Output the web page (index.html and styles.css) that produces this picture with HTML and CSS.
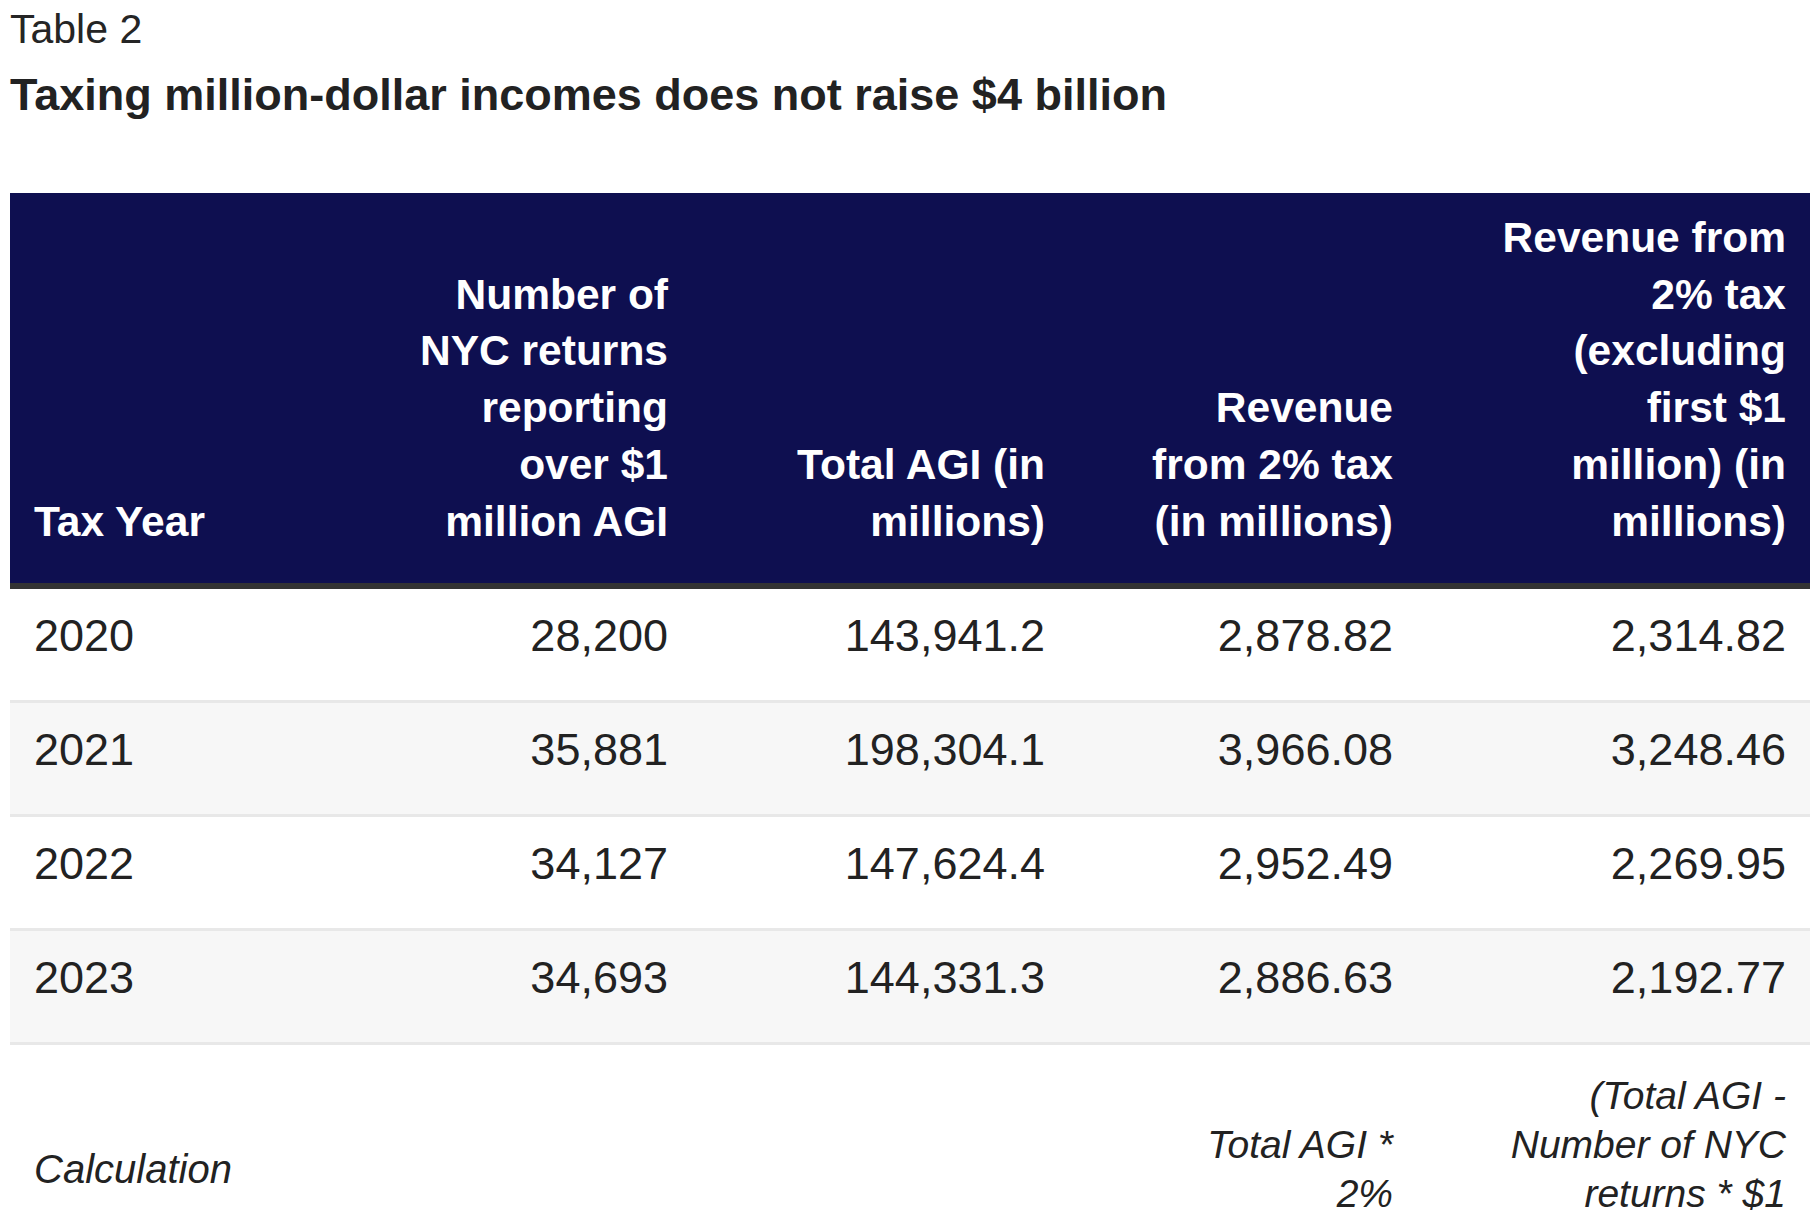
FILE: index.html
```html
<!DOCTYPE html>
<html lang="en">
<head>
<meta charset="utf-8">
<title>Table 2</title>
<link rel="stylesheet" href="styles.css">
</head>
<body>
<div class="page">
  <div class="label">Table 2</div>
  <h1 class="title">Taxing million-dollar incomes does not raise $4 billion</h1>
  <table class="data">
    <colgroup>
      <col class="c1"><col class="c2"><col class="c3"><col class="c4"><col class="c5">
    </colgroup>
    <thead>
      <tr>
        <th class="left">Tax Year</th>
        <th>Number of<br>NYC returns<br>reporting<br>over $1<br>million AGI</th>
        <th>Total AGI (in<br>millions)</th>
        <th>Revenue<br>from 2% tax<br>(in millions)</th>
        <th>Revenue from<br>2% tax<br>(excluding<br>first $1<br>million) (in<br>millions)</th>
      </tr>
    </thead>
    <tbody>
      <tr>
        <td class="left">2020</td><td>28,200</td><td>143,941.2</td><td>2,878.82</td><td>2,314.82</td>
      </tr>
      <tr>
        <td class="left">2021</td><td>35,881</td><td>198,304.1</td><td>3,966.08</td><td>3,248.46</td>
      </tr>
      <tr>
        <td class="left">2022</td><td>34,127</td><td>147,624.4</td><td>2,952.49</td><td>2,269.95</td>
      </tr>
      <tr>
        <td class="left">2023</td><td>34,693</td><td>144,331.3</td><td>2,886.63</td><td>2,192.77</td>
      </tr>
    </tbody>
    <tfoot>
      <tr>
        <td class="left calc">Calculation</td>
        <td></td>
        <td></td>
        <td>Total AGI *<br>2%</td>
        <td>(Total AGI -<br>Number of NYC<br>returns * $1<br>million) * 2%</td>
      </tr>
    </tfoot>
  </table>
</div>
</body>
</html>
```
FILE: styles.css
```css
html, body {
  margin: 0;
  padding: 0;
  background: #ffffff;
}

body {
  font-family: "Liberation Sans", Arial, sans-serif;
  color: #222222;
}

.page {
  padding: 0 10px;
}

.label {
  font-size: 41px;
  line-height: 46px;
  font-weight: 400;
  color: #252525;
  margin-top: 6px;
}

.title {
  font-size: 45px;
  line-height: 52px;
  font-weight: 700;
  color: #222222;
  margin: 17px 0 0 0;
}

.data {
  margin-top: 72px;
  width: 1800px;
  table-layout: fixed;
  border-collapse: separate;
  border-spacing: 0;
}

.c1 { width: 372px; }
.c2 { width: 310px; }
.c3 { width: 377px; }
.c4 { width: 348px; }
.c5 { width: 393px; }

.data th,
.data td {
  text-align: right;
  white-space: nowrap;
  padding-left: 24px;
  padding-right: 24px;
}

.data .left {
  text-align: left;
}

.data thead th {
  background: #0e0f50;
  color: #ffffff;
  font-size: 42.5px;
  font-weight: 700;
  line-height: 56.7px;
  vertical-align: bottom;
  padding-top: 17px;
  padding-bottom: 33px;
  border-bottom: 6px solid #333333;
}

.data tbody td {
  font-size: 45px;
  line-height: 60px;
  padding-top: 17px;
  padding-bottom: 34px;
  border-bottom: 3px solid #e8e8e8;
  vertical-align: top;
  color: #222222;
}

.data tbody tr:nth-child(even) td {
  background: #f7f7f7;
}

.data tfoot td {
  font-size: 39px;
  font-style: italic;
  line-height: 49px;
  padding-top: 26px;
  padding-bottom: 20px;
  vertical-align: middle;
  color: #222222;
}

.data tfoot td.calc {
  font-size: 40px;
}
```
